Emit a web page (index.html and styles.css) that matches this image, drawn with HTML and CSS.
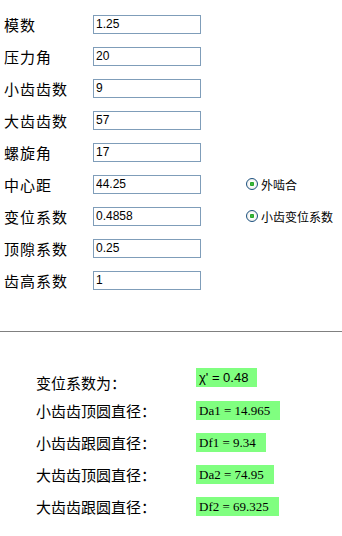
FILE: index.html
```html
<!DOCTYPE html>
<html lang="zh-CN">
<head>
    <meta charset="UTF-8">
    <meta name="viewport" content="width=device-width, initial-scale=1.0">
    <title>齿轮参数计算</title>
    <link rel="stylesheet" href="styles.css">
</head>
<body>

<div class="form">
    <div class="row">
        <label class="label">模数</label>
        <input class="field" type="text" value="1.25">
    </div>
    <div class="row">
        <label class="label">压力角</label>
        <input class="field" type="text" value="20">
    </div>
    <div class="row">
        <label class="label">小齿齿数</label>
        <input class="field" type="text" value="9">
    </div>
    <div class="row">
        <label class="label">大齿齿数</label>
        <input class="field" type="text" value="57">
    </div>
    <div class="row">
        <label class="label">螺旋角</label>
        <input class="field" type="text" value="17">
    </div>
    <div class="row">
        <label class="label">中心距</label>
        <input class="field" type="text" value="44.25">
        <span class="option"><span class="radio"></span>外啮合</span>
    </div>
    <div class="row">
        <label class="label">变位系数</label>
        <input class="field" type="text" value="0.4858">
        <span class="option"><span class="radio"></span>小齿变位系数</span>
    </div>
    <div class="row">
        <label class="label">顶隙系数</label>
        <input class="field" type="text" value="0.25">
    </div>
    <div class="row">
        <label class="label">齿高系数</label>
        <input class="field" type="text" value="1">
    </div>
</div>

<hr class="divider">

<div class="results">
    <div class="result first">
        <span class="name">变位系数为：</span>
        <span class="value sans">χ' = 0.48</span>
    </div>
    <div class="result">
        <span class="name">小齿齿顶圆直径：</span>
        <span class="value">Da1 = 14.965</span>
    </div>
    <div class="result">
        <span class="name">小齿齿跟圆直径：</span>
        <span class="value">Df1 = 9.34</span>
    </div>
    <div class="result">
        <span class="name">大齿齿顶圆直径：</span>
        <span class="value">Da2 = 74.95</span>
    </div>
    <div class="result">
        <span class="name">大齿齿跟圆直径：</span>
        <span class="value">Df2 = 69.325</span>
    </div>
</div>

</body>
</html>
```

FILE: styles.css
```css
body {
    font-family: "Noto Sans CJK SC", "Liberation Sans", sans-serif;
    background-color: #fff;
    color: #000;
    margin: 0;
}
.form {
    padding-top: 8px;
}
.row {
    display: flex;
    align-items: center;
    height: 32px;
}
.label {
    width: 89px;
    padding-left: 4px;
    font-size: 15px;
    letter-spacing: 1px;
}
.field {
    box-sizing: border-box;
    width: 108px;
    height: 19px;
    margin: 0;
    padding: 0 2px;
    border: 1px solid #7f9db9;
    font-family: "Liberation Sans", sans-serif;
    font-size: 12px;
    color: #000;
}
.option {
    display: flex;
    align-items: center;
    margin-left: 45px;
    font-size: 12px;
}
.radio {
    box-sizing: border-box;
    width: 12px;
    height: 12px;
    margin-right: 3px;
    border: 1px solid #1c5180;
    border-radius: 50%;
    background: radial-gradient(circle, #4ec24e 0, #21a121 2px, #fff 2.5px, #e8e8e2 6px);
}
.divider {
    margin: 35px 0 0;
    border: none;
    border-top: 1px solid #808080;
}
.results {
    padding-top: 29px;
}
.result {
    display: flex;
    align-items: center;
    height: 32px;
}
.result.first {
    height: 33px;
}
.name {
    width: 160px;
    padding-left: 36px;
    font-size: 15px;
}
.result.first .name {
    position: relative;
    top: 5px;
}
.value {
    box-sizing: border-box;
    height: 19px;
    padding: 0 10px 0 3px;
    background-color: #80ff80;
    font-family: "Liberation Serif", serif;
    font-size: 13px;
    line-height: 19px;
}
.value.sans {
    font-family: "Liberation Sans", sans-serif;
    font-size: 13px;
    padding-right: 9px;
}
```
